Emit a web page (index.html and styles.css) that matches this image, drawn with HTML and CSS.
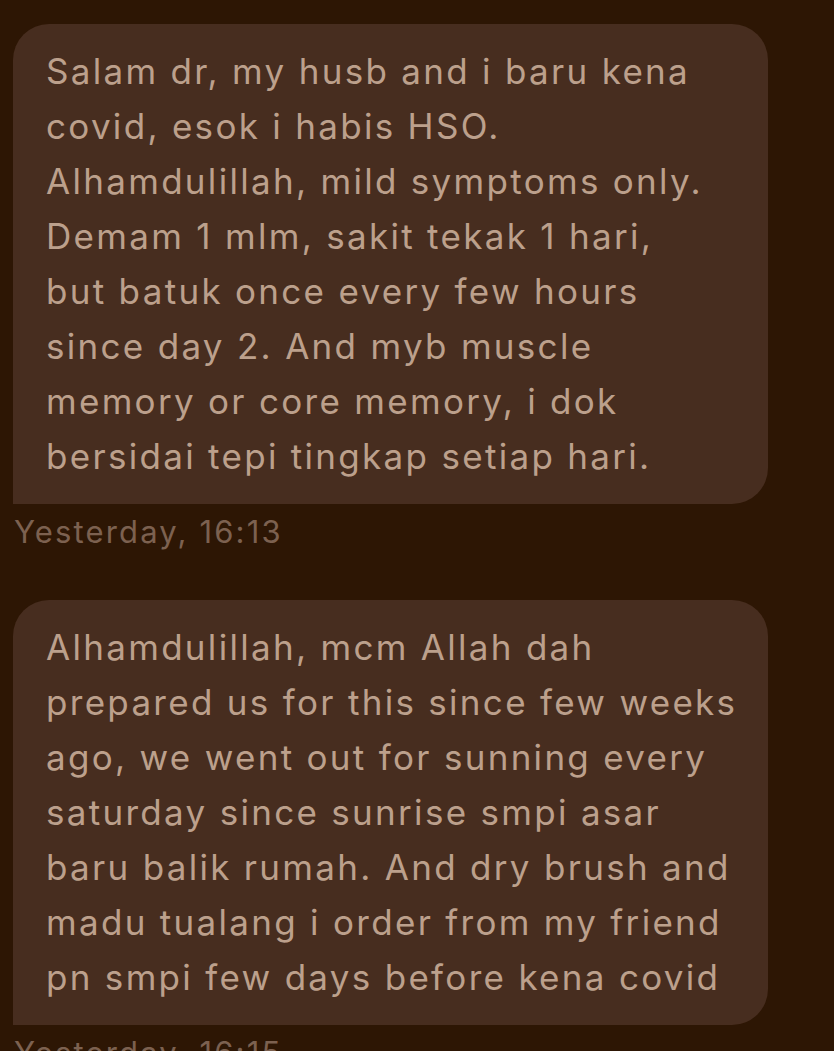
FILE: index.html
```html
<!DOCTYPE html>
<html>
<head>
<meta charset="utf-8">
<link rel="stylesheet" href="styles.css">
</head>
<body>
<div class="thread">
  <div class="msg">
    <div class="bubble">Salam dr, my husb and i baru kena<br>covid, esok i habis HSO.<br>Alhamdulillah, mild symptoms only.<br>Demam 1 mlm, sakit tekak 1 hari,<br>but batuk once every few hours<br>since day 2. And myb muscle<br>memory or core memory, i dok<br>bersidai tepi tingkap setiap hari.</div>
    <div class="time">Yesterday, 16:13</div>
  </div>
  <div class="msg">
    <div class="bubble">Alhamdulillah, mcm Allah dah<br>prepared us for this since few weeks<br>ago, we went out for sunning every<br>saturday since sunrise smpi asar<br>baru balik rumah. And dry brush and<br>madu tualang i order from my friend<br>pn smpi few days before kena covid</div>
    <div class="time">Yesterday, 16:15</div>
  </div>
</div>
</body>
</html>
```
FILE: styles.css
```css
html, body {
  margin: 0;
  padding: 0;
  background: #2d1604;
  height: 100%;
  overflow: hidden;
}
.thread {
  display: flex;
  flex-direction: column;
  gap: 50px;
  padding: 24px 0 0 13px;
  font-family: Inter, "Noto Sans", sans-serif;
}
.msg {
  display: flex;
  flex-direction: column;
  align-items: flex-start;
}
.bubble {
  box-sizing: border-box;
  width: 755px;
  background: #472d1f;
  color: #bca08c;
  font-size: 35px;
  letter-spacing: 2.3px;
  line-height: 55px;
  padding: 20px 20px 20px 33px;
  border-radius: 36px 36px 36px 0;
  white-space: nowrap;
}
.time {
  color: #7c6150;
  font-size: 31px;
  letter-spacing: 2.15px;
  line-height: 36px;
  margin-top: 10px;
  padding-left: 1px;
}
```
